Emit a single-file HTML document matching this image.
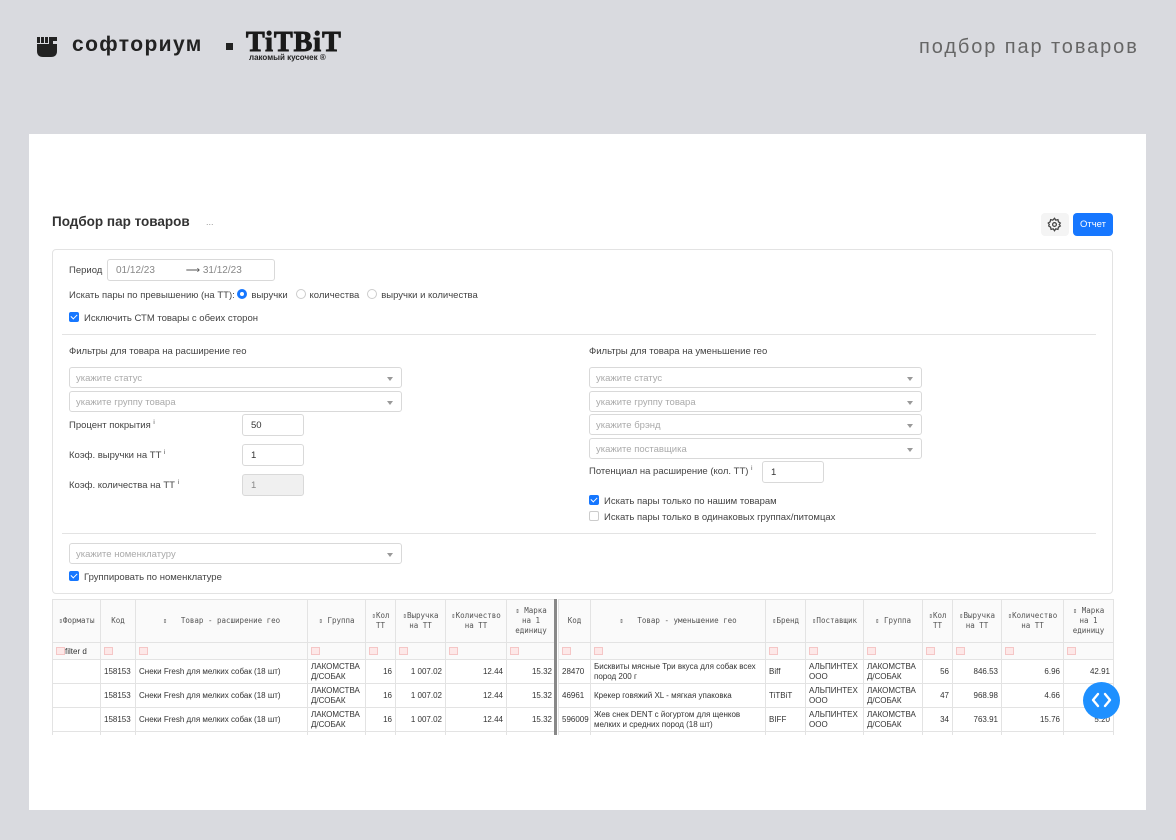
<!DOCTYPE html>
<html><head><meta charset="utf-8"><style>
*{box-sizing:border-box;margin:0;padding:0}
body{width:1176px;height:840px;background:#d9dadf;font-family:"Liberation Sans","Noto Sans CJK SC",sans-serif;position:relative;overflow:hidden;color:#333}
.a{position:absolute}
.card{left:29px;top:134px;width:1117px;height:676px;background:#fff}
.lbl{font-size:9.5px;color:#444;white-space:nowrap}
.sel{height:21px;border:1px solid #d9d9d9;border-radius:3px;font-size:9.5px;color:#aaa;padding:5px 6px;background:#fff}
.sel:after{content:"";position:absolute;right:8px;top:9px;border:3px solid transparent;border-top:4px solid #999}
.inp{height:22px;border:1px solid #d9d9d9;border-radius:3px;font-size:9.5px;color:#333;padding:5px 8px;background:#fff}
.cb{width:10px;height:10px;border-radius:2px;background:#1677ff;display:inline-block;position:relative;vertical-align:-1px;margin-right:5px}
.cb:after{content:"";position:absolute;left:3px;top:1px;width:3px;height:5px;border:solid #fff;border-width:0 1.5px 1.5px 0;transform:rotate(45deg)}
.cbe{width:10px;height:10px;border-radius:2px;border:1px solid #ccc;display:inline-block;vertical-align:-1px;margin-right:5px}
.rad{width:10px;height:10px;border-radius:50%;border:1px solid #ccc;display:inline-block;vertical-align:-1px;margin-right:4px}
.rad.on{border:3px solid #1677ff}
table{border-collapse:collapse;table-layout:fixed;position:absolute;top:599px;font-size:8px;color:#333}
td,th{border:1px solid #e3e3e3;overflow:hidden;white-space:nowrap}
th{height:43px;font-weight:normal;font-family:"DejaVu Sans Mono","Liberation Mono",monospace;font-size:7.5px;color:#555;text-align:center;line-height:10px;background:#fafafa}
tr.f td{height:17px;background:#fafafa}
tr.f td span{display:inline-block;width:9px;height:8px;border:1px solid #f5c6c6;background:#fde8e8;margin-left:3px;vertical-align:middle}
tr.r td{height:24px;padding:1px 3px;line-height:10px;white-space:normal}
.n{text-align:right}
</style></head><body>
<svg class="a" style="left:36px;top:36px" width="22" height="22" viewBox="0 0 22 22"><rect x="1" y="1" width="3" height="6" fill="#222"/><rect x="5" y="1" width="3" height="6" fill="#222"/><rect x="9" y="1" width="3" height="6" fill="#222"/><rect x="13" y="1" width="8" height="4" fill="#222"/><path d="M1 8H21V15Q21 21 15 21H7Q1 21 1 15Z" fill="#222"/><rect x="13" y="5" width="4" height="3" fill="#222"/></svg>
<div class="a" style="left:72px;top:33px;font-size:21px;font-weight:bold;color:#222;letter-spacing:1.4px">софториум</div>
<div class="a" style="left:226px;top:43px;width:7px;height:7px;background:#222"></div>
<div class="a" style="left:246px;top:27px;font-family:'Liberation Serif',serif;font-size:28px;font-weight:bold;color:#1a1a1a;letter-spacing:1px;-webkit-text-stroke:1px #1a1a1a">TiTBiT</div>
<div class="a" style="left:249px;top:53px;font-size:8px;color:#222;font-weight:bold">лакомый кусочек ®</div>
<div class="a" style="left:919px;top:36px;font-size:20px;color:#666;letter-spacing:1.9px">подбор пар товаров</div>

<div class="a card"></div>
<div class="a" style="left:52px;top:214px;font-size:13.5px;font-weight:bold;color:#333">Подбор пар товаров</div>
<div class="a" style="left:206px;top:217px;font-size:9px;color:#999">...</div>
<div class="a" style="left:1041px;top:213px;width:28px;height:23px;background:#f4f4f4;border-radius:4px"></div>
<svg class="a" style="left:1047px;top:217px" width="15" height="15" viewBox="0 0 24 24" fill="none" stroke="#444" stroke-width="2"><circle cx="12" cy="12" r="3"/><path d="M12 2l2 3 3.5-.8.8 3.5 3 2-1.7 2.3 1.7 2.3-3 2-.8 3.5-3.5-.8-2 3-2-3-3.5.8-.8-3.5-3-2L3.7 12 2 9.7l3-2 .8-3.5L9.3 5z"/></svg>
<div class="a" style="left:1073px;top:213px;width:40px;height:23px;background:#1677ff;border-radius:4px;color:#fff;font-size:9.5px;text-align:center;line-height:23px">Отчет</div>

<div class="a" style="left:52px;top:249px;width:1061px;height:345px;border:1px solid #e3e3e3;border-radius:4px"></div>
<div class="a lbl" style="left:69px;top:265px">Период</div>
<div class="a inp" style="left:107px;top:259px;width:168px;color:#888;font-size:10px">01/12/23 <span style="margin-left:28px;color:#555">⟶</span> 31/12/23</div>
<div class="a lbl" style="left:69px;top:289px">Искать пары по превышению (на ТТ): <span class="rad on"></span>выручки &nbsp; <span class="rad"></span>количества &nbsp; <span class="rad"></span>выручки и количества</div>
<div class="a lbl" style="left:69px;top:312px"><span class="cb"></span>Исключить СТМ товары с обеих сторон</div>
<div class="a" style="left:62px;top:334px;width:1034px;height:1px;background:#e3e3e3"></div>

<div class="a lbl" style="left:69px;top:346px">Фильтры для товара на расширение гео</div>
<div class="a sel" style="left:69px;top:367px;width:333px">укажите статус</div>
<div class="a sel" style="left:69px;top:391px;width:333px">укажите группу товара</div>
<div class="a lbl" style="left:69px;top:420px">Процент покрытия <sup style="font-size:6px">i</sup></div>
<div class="a inp" style="left:242px;top:414px;width:62px">50</div>
<div class="a lbl" style="left:69px;top:450px">Коэф. выручки на ТТ <sup style="font-size:6px">i</sup></div>
<div class="a inp" style="left:242px;top:444px;width:62px">1</div>
<div class="a lbl" style="left:69px;top:480px">Коэф. количества на ТТ <sup style="font-size:6px">i</sup></div>
<div class="a inp" style="left:242px;top:474px;width:62px;background:#f0f0f0;color:#888">1</div>

<div class="a lbl" style="left:589px;top:346px">Фильтры для товара на уменьшение гео</div>
<div class="a sel" style="left:589px;top:367px;width:333px">укажите статус</div>
<div class="a sel" style="left:589px;top:391px;width:333px">укажите группу товара</div>
<div class="a sel" style="left:589px;top:414px;width:333px">укажите брэнд</div>
<div class="a sel" style="left:589px;top:438px;width:333px">укажите поставщика</div>
<div class="a lbl" style="left:589px;top:466px">Потенциал на расширение (кол. ТТ) <sup style="font-size:6px">i</sup></div>
<div class="a inp" style="left:762px;top:461px;width:62px">1</div>
<div class="a lbl" style="left:589px;top:495px"><span class="cb"></span>Искать пары только по нашим товарам</div>
<div class="a lbl" style="left:589px;top:511px"><span class="cbe"></span>Искать пары только в одинаковых группах/питомцах</div>
<div class="a" style="left:62px;top:533px;width:1034px;height:1px;background:#e3e3e3"></div>
<div class="a sel" style="left:69px;top:543px;width:333px">укажите номенклатуру</div>
<div class="a lbl" style="left:69px;top:571px"><span class="cb"></span>Группировать по номенклатуре</div>

<table style="left:52px;width:503px">
<colgroup><col width="48"><col width="35"><col width="172"><col width="58"><col width="30"><col width="50"><col width="61"><col width="49"></colgroup>
<tr><th>⇕Форматы</th><th>Код</th><th>⇕ &nbsp; Товар - расширение гео</th><th>⇕ Группа</th><th>⇕Кол<br>ТТ</th><th>⇕Выручка<br>на ТТ</th><th>⇕Количество<br>на ТТ</th><th>⇕ Марка<br>на 1<br>единицу</th></tr>
<tr class="f"><td><span></span>filter d</td><td><span></span></td><td><span></span></td><td><span></span></td><td><span></span></td><td><span></span></td><td><span></span></td><td><span></span></td></tr>
<tr class="r"><td></td><td>158153</td><td>Снеки Fresh для мелких собак (18 шт)</td><td>ЛАКОМСТВА Д/СОБАК</td><td class="n">16</td><td class="n">1 007.02</td><td class="n">12.44</td><td class="n">15.32</td></tr>
<tr class="r"><td></td><td>158153</td><td>Снеки Fresh для мелких собак (18 шт)</td><td>ЛАКОМСТВА Д/СОБАК</td><td class="n">16</td><td class="n">1 007.02</td><td class="n">12.44</td><td class="n">15.32</td></tr>
<tr class="r"><td></td><td>158153</td><td>Снеки Fresh для мелких собак (18 шт)</td><td>ЛАКОМСТВА Д/СОБАК</td><td class="n">16</td><td class="n">1 007.02</td><td class="n">12.44</td><td class="n">15.32</td></tr>
<tr class="r"><td></td><td></td><td></td><td>ЛАКОМСТВА</td><td></td><td></td><td></td><td></td></tr>
</table>
<div class="a" style="left:554px;top:599px;width:3px;height:136px;background:#888"></div>
<table style="left:558px;width:555px">
<colgroup><col width="32"><col width="175"><col width="40"><col width="58"><col width="59"><col width="30"><col width="49"><col width="62"><col width="50"></colgroup>
<tr><th>Код</th><th>⇕ &nbsp; Товар - уменьшение гео</th><th>⇕Бренд</th><th>⇕Поставщик</th><th>⇕ Группа</th><th>⇕Кол<br>ТТ</th><th>⇕Выручка<br>на ТТ</th><th>⇕Количество<br>на ТТ</th><th>⇕ Марка<br>на 1<br>единицу</th></tr>
<tr class="f"><td><span></span></td><td><span></span></td><td><span></span></td><td><span></span></td><td><span></span></td><td><span></span></td><td><span></span></td><td><span></span></td><td><span></span></td></tr>
<tr class="r"><td>28470</td><td>Бисквиты мясные Три вкуса для собак всех пород 200 г</td><td>Biff</td><td>АЛЬПИНТЕХ ООО</td><td>ЛАКОМСТВА Д/СОБАК</td><td class="n">56</td><td class="n">846.53</td><td class="n">6.96</td><td class="n">42.91</td></tr>
<tr class="r"><td>46961</td><td>Крекер говяжий XL - мягкая упаковка</td><td>TiTBiT</td><td>АЛЬПИНТЕХ ООО</td><td>ЛАКОМСТВА Д/СОБАК</td><td class="n">47</td><td class="n">968.98</td><td class="n">4.66</td><td class="n"></td></tr>
<tr class="r"><td>596009</td><td>Жев снек DENT с йогуртом для щенков мелких и средних пород (18 шт)</td><td>BIFF</td><td>АЛЬПИНТЕХ ООО</td><td>ЛАКОМСТВА Д/СОБАК</td><td class="n">34</td><td class="n">763.91</td><td class="n">15.76</td><td class="n">5.20</td></tr>
<tr class="r"><td></td><td>Жев снек DENT со вкусом утки для собак</td><td></td><td>АЛЬПИНТЕХ</td><td>ЛАКОМСТВА</td><td></td><td></td><td></td><td></td></tr>
</table>
<div class="a" style="left:29px;top:735px;width:1117px;height:75px;background:#fff"></div>
<div class="a" style="left:1083px;top:682px;width:37px;height:37px;border-radius:50%;background:#1e90ff"></div>
<svg class="a" style="left:1090px;top:690px" width="23" height="20" viewBox="0 0 23 20" fill="none" stroke="#fff" stroke-width="2.4" stroke-linecap="round" stroke-linejoin="round"><path d="M8 4L3 10L8 16M15 4L20 10L15 16"/></svg>
</body></html>
